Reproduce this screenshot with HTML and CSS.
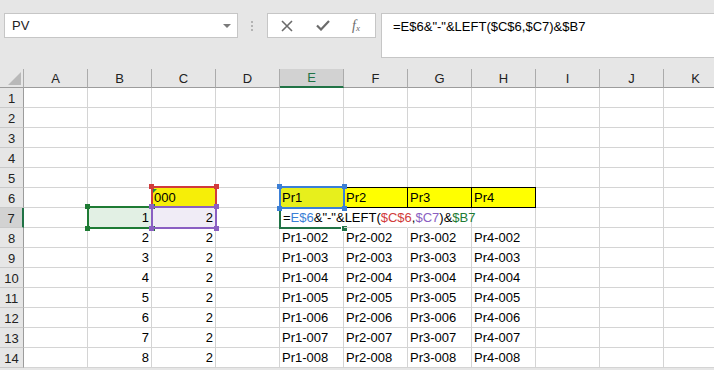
FILE: index.html
```html
<!DOCTYPE html>
<html lang="en">
<head>
    <meta charset="UTF-8">
    <meta name="viewport" content="width=device-width, initial-scale=1.0">
    <title>Book1 - Excel</title>
    <link rel="stylesheet" href="styles.css">
</head>
<body>
    <!-- Name box + formula bar -->
    <div class="toolbar">
        <div class="namebox"><span>PV</span><span class="caret"></span></div>
        <div class="grip"><i></i><i></i><i></i></div>
        <div class="fbuttons">
            <svg width="12" height="12" viewBox="0 0 12 12"><path d="M1 1L11 11M11 1L1 11" stroke="#6b6b6b" stroke-width="1.6" fill="none"/></svg>
            <svg width="14" height="11" viewBox="0 0 14 11"><path d="M1 5.5L5 9.5L13 1" stroke="#6b6b6b" stroke-width="2.2" fill="none"/></svg>
            <span class="fx">f<sub>x</sub></span>
        </div>
        <div class="formula">=E$6&amp;"-"&amp;LEFT($C$6,$C7)&amp;$B7</div>
    </div>

    <!-- Worksheet grid -->
    <div class="sheet">
        <div class="corner"></div>
        <div class="ch">A</div><div class="ch">B</div><div class="ch">C</div><div class="ch">D</div>
        <div class="ch sel">E</div><div class="ch">F</div><div class="ch">G</div><div class="ch">H</div>
        <div class="ch">I</div><div class="ch">J</div><div class="ch">K</div>

        <div class="rh">1</div><div class="c"></div><div class="c"></div><div class="c"></div><div class="c"></div><div class="c"></div><div class="c"></div><div class="c"></div><div class="c"></div><div class="c"></div><div class="c"></div><div class="c"></div>
        <div class="rh">2</div><div class="c"></div><div class="c"></div><div class="c"></div><div class="c"></div><div class="c"></div><div class="c"></div><div class="c"></div><div class="c"></div><div class="c"></div><div class="c"></div><div class="c"></div>
        <div class="rh">3</div><div class="c"></div><div class="c"></div><div class="c"></div><div class="c"></div><div class="c"></div><div class="c"></div><div class="c"></div><div class="c"></div><div class="c"></div><div class="c"></div><div class="c"></div>
        <div class="rh">4</div><div class="c"></div><div class="c"></div><div class="c"></div><div class="c"></div><div class="c"></div><div class="c"></div><div class="c"></div><div class="c"></div><div class="c"></div><div class="c"></div><div class="c"></div>
        <div class="rh">5</div><div class="c"></div><div class="c"></div><div class="c"></div><div class="c"></div><div class="c"></div><div class="c"></div><div class="c"></div><div class="c"></div><div class="c"></div><div class="c"></div><div class="c"></div>

        <div class="rh">6</div><div class="c"></div><div class="c"></div>
        <div class="c yel-red">000<span class="errmark"></span><div class="hl red"><i class="k tl"></i><i class="k tr"></i></div></div>
        <div class="c"></div>
        <div class="c yel yel-blue">Pr1<div class="hl blue"><i class="k tl"></i><i class="k tr"></i><i class="k bl"></i><i class="k br"></i></div></div>
        <div class="c yel">Pr2</div><div class="c yel">Pr3</div><div class="c yel">Pr4</div>
        <div class="c"></div><div class="c"></div><div class="c"></div>

        <div class="rh sel">7</div><div class="c"></div>
        <div class="c num tint-green">1<div class="hl green"><i class="k tl"></i><i class="k tr"></i><i class="k bl"></i><i class="k br"></i></div></div>
        <div class="c num tint-purple">2<div class="hl purple"><i class="k tl"></i><i class="k tr"></i><i class="k bl"></i><i class="k br"></i></div></div>
        <div class="c"></div>
        <div class="c active span">=<span class="r-blue">E$6</span>&amp;"-"&amp;LEFT(<span class="r-red">$C$6</span>,<span class="r-purple">$C7</span>)&amp;<span class="r-green">$B7</span><div class="cursor"><i class="handle"></i></div></div>
        <div class="c span"></div><div class="c"></div><div class="c"></div>
        <div class="c"></div><div class="c"></div><div class="c"></div>

        <div class="rh">8</div><div class="c"></div><div class="c num">2</div><div class="c num">2</div><div class="c"></div><div class="c">Pr1-002</div><div class="c">Pr2-002</div><div class="c">Pr3-002</div><div class="c">Pr4-002</div><div class="c"></div><div class="c"></div><div class="c"></div>
        <div class="rh">9</div><div class="c"></div><div class="c num">3</div><div class="c num">2</div><div class="c"></div><div class="c">Pr1-003</div><div class="c">Pr2-003</div><div class="c">Pr3-003</div><div class="c">Pr4-003</div><div class="c"></div><div class="c"></div><div class="c"></div>
        <div class="rh">10</div><div class="c"></div><div class="c num">4</div><div class="c num">2</div><div class="c"></div><div class="c">Pr1-004</div><div class="c">Pr2-004</div><div class="c">Pr3-004</div><div class="c">Pr4-004</div><div class="c"></div><div class="c"></div><div class="c"></div>
        <div class="rh">11</div><div class="c"></div><div class="c num">5</div><div class="c num">2</div><div class="c"></div><div class="c">Pr1-005</div><div class="c">Pr2-005</div><div class="c">Pr3-005</div><div class="c">Pr4-005</div><div class="c"></div><div class="c"></div><div class="c"></div>
        <div class="rh">12</div><div class="c"></div><div class="c num">6</div><div class="c num">2</div><div class="c"></div><div class="c">Pr1-006</div><div class="c">Pr2-006</div><div class="c">Pr3-006</div><div class="c">Pr4-006</div><div class="c"></div><div class="c"></div><div class="c"></div>
        <div class="rh">13</div><div class="c"></div><div class="c num">7</div><div class="c num">2</div><div class="c"></div><div class="c">Pr1-007</div><div class="c">Pr2-007</div><div class="c">Pr3-007</div><div class="c">Pr4-007</div><div class="c"></div><div class="c"></div><div class="c"></div>
        <div class="rh">14</div><div class="c"></div><div class="c num">8</div><div class="c num">2</div><div class="c"></div><div class="c">Pr1-008</div><div class="c">Pr2-008</div><div class="c">Pr3-008</div><div class="c">Pr4-008</div><div class="c"></div><div class="c"></div><div class="c"></div>
    </div>
</body>
</html>
```

FILE: styles.css
```css
body {
    margin: 0;
    overflow: hidden;
    background: #e6e6e6;
    font-family: "Liberation Sans", Arial, sans-serif;
    font-size: 13px;
    color: #000;
}

/* ---------- formula bar ---------- */
.toolbar {
    display: flex;
    align-items: flex-start;
    height: 69px;
    padding: 13px 0 0 4px;
    box-sizing: border-box;
}
.namebox {
    display: flex;
    align-items: center;
    justify-content: space-between;
    width: 234px;
    height: 25px;
    padding: 0 6px 0 7px;
    box-sizing: border-box;
    background: #fff;
    border: 1px solid #c6c6c6;
    font-size: 13px;
    color: #222;
}
.caret {
    width: 0;
    height: 0;
    border-left: 4px solid transparent;
    border-right: 4px solid transparent;
    border-top: 4px solid #7a7a7a;
    margin-top: 1px;
}
.grip {
    display: flex;
    flex-direction: column;
    gap: 2px;
    width: 2px;
    margin: 8px 14px 0 13px;
}
.grip i {
    width: 2px;
    height: 2px;
    background: #b3b3b3;
}
.fbuttons {
    display: flex;
    align-items: center;
    justify-content: space-between;
    width: 109px;
    height: 25px;
    padding: 0 15px 0 13px;
    box-sizing: border-box;
    background: #fff;
    border: 1px solid #c6c6c6;
}
.fx {
    font-family: "Liberation Serif", "Times New Roman", serif;
    font-style: italic;
    font-size: 14px;
    color: #6b6b6b;
    line-height: 1;
}
.fx sub {
    font-size: 9px;
    vertical-align: -1px;
}
.formula {
    flex: 1;
    height: 45px;
    margin-left: 5px;
    padding: 5px 0 0 11px;
    box-sizing: border-box;
    background: #fff;
    border: 1px solid #c6c6c6;
    border-right: none;
    font-size: 13px;
    white-space: nowrap;
}

/* ---------- grid ---------- */
.sheet {
    display: grid;
    grid-template-columns: 24px repeat(11, 64px);
    grid-template-rows: 19px;
    grid-auto-rows: 20px;
    background: #fff;
}
.corner {
    position: relative;
    background: #e6e6e6;
    border-right: 1px solid #ababab;
    border-bottom: 1px solid #9c9c9c;
}
.corner::after {
    content: "";
    position: absolute;
    right: 2px;
    bottom: 2px;
    width: 0;
    height: 0;
    border-left: 13px solid transparent;
    border-bottom: 13px solid #b9b9b9;
}
.ch {
    display: flex;
    align-items: center;
    justify-content: center;
    background: #e6e6e6;
    border-right: 1px solid #ababab;
    border-bottom: 1px solid #9c9c9c;
    color: #222;
}
.ch.sel {
    background: #d2d2d2;
    border-bottom: 2px solid #217346;
    color: #217346;
}
.rh {
    display: flex;
    align-items: center;
    justify-content: center;
    padding-top: 1px;
    background: #e6e6e6;
    border-right: 1px solid #9c9c9c;
    border-bottom: 1px solid #c9c9c9;
    color: #222;
}
.rh.sel {
    background: #d2d2d2;
    border-right: 2px solid #217346;
}
.c {
    position: relative;
    display: flex;
    align-items: flex-end;
    padding: 0 2px 2px 2px;
    line-height: 15px;
    border-right: 1px solid #d4d4d4;
    border-bottom: 1px solid #d4d4d4;
    white-space: nowrap;
}
.c.num {
    justify-content: flex-end;
}
.c.span {
    border-right-color: transparent;
    z-index: 1;
}

/* filled cells */
.yel {
    background: #ffff00;
    border-right-color: #000;
    border-bottom-color: #000;
    box-shadow: 0 -1px 0 #000;
}
.yel-red { background: #f6ee08; }
.yel.yel-blue { background: #e7ef1c; }
.tint-green { background: #e2f0e4; }
.tint-purple { background: #f0ecf6; }

.errmark {
    position: absolute;
    top: 1px;
    left: 1px;
    width: 0;
    height: 0;
    border-top: 4px solid #1e8c3e;
    border-right: 4px solid transparent;
}

/* reference highlight boxes drawn over the cells */
.hl {
    position: absolute;
    top: -2px;
    left: -1px;
    right: -2px;
    bottom: -2px;
    border: 2px solid;
    z-index: 2;
}
.hl.red { border-color: #d13b3b; bottom: -1px; }
.hl.blue { border-color: #3b7fd6; z-index: 3; }
.hl.green { border-color: #1e7b34; }
.hl.purple { border-color: #8a5fc2; z-index: 3; }
.hl.red .k { background: #d13b3b; }
.hl.blue .k { background: #3b7fd6; }
.hl.green .k { background: #1e7b34; }
.hl.purple .k { background: #8a5fc2; }
.k {
    position: absolute;
    width: 5px;
    height: 5px;
}
.k.tl { top: -4px; left: -4px; }
.k.tr { top: -4px; right: -4px; }
.k.bl { bottom: -4px; left: -4px; }
.k.br { bottom: -4px; right: -4px; }

/* active edit cell */
.active {
    padding-left: 3px;
}
.cursor {
    position: absolute;
    top: 0;
    left: -1px;
    right: -2px;
    bottom: -2px;
    border-left: 2px solid #217346;
    border-bottom: 2px solid #217346;
    z-index: 2;
}
.handle {
    position: absolute;
    right: -2px;
    bottom: -4px;
    width: 5px;
    height: 5px;
    background: #217346;
    box-shadow: 0 0 0 1px #fff;
}
.r-blue { color: #3b7fd6; }
.r-red { color: #d13b3b; }
.r-purple { color: #8a5fc2; }
.r-green { color: #1e7b34; }
```
